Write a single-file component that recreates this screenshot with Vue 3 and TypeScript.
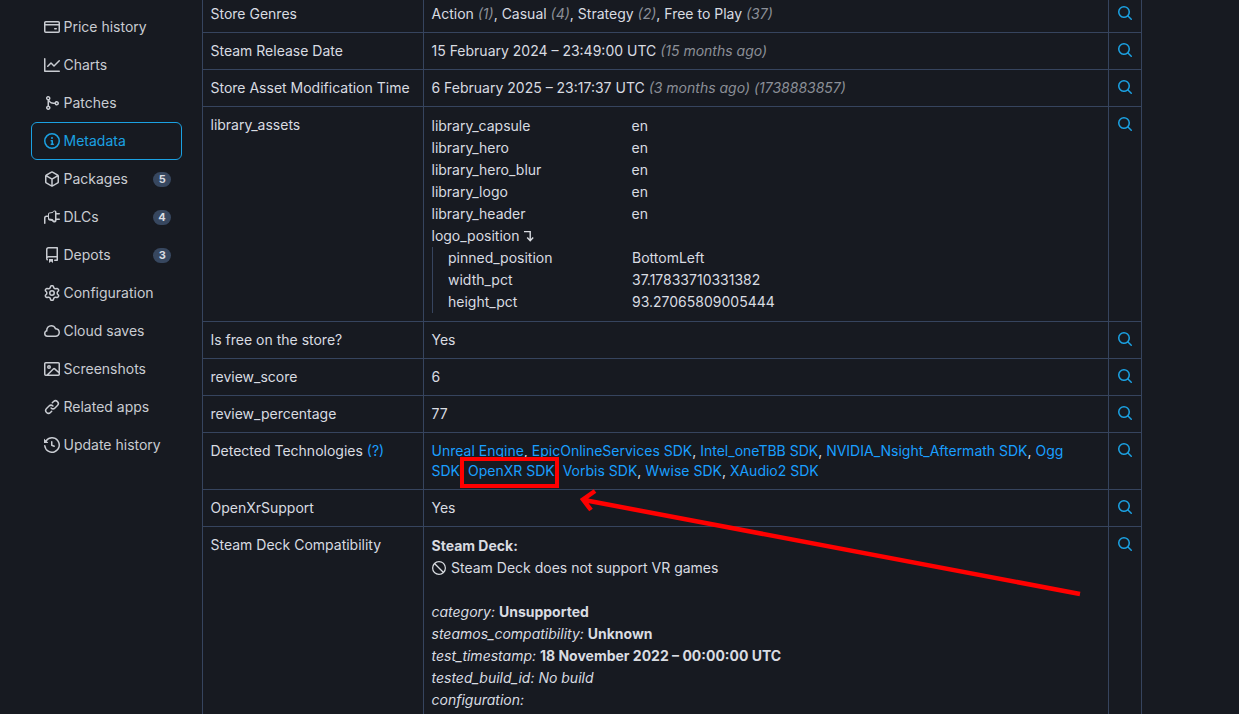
<script setup lang="ts">
interface NavItem { label: string; icon: string; badge?: number; active?: boolean }

const icons: Record<string, string> = {
  card: 'M10.75 9a.75.75 0 0 0 0 1.5h1.5a.75.75 0 0 0 0-1.5h-1.5Z M0 3.75C0 2.784.784 2 1.75 2h12.5c.966 0 1.75.784 1.75 1.75v8.5A1.75 1.75 0 0 1 14.25 14H1.75A1.75 1.75 0 0 1 0 12.25ZM14.5 6.5h-13v5.75c0 .138.112.25.25.25h12.5a.25.25 0 0 0 .25-.25Zm0-2.75a.25.25 0 0 0-.25-.25H1.75a.25.25 0 0 0-.25.25V5h13Z',
  graph: 'M1.5 1.75V13.5h13.75a.75.75 0 0 1 0 1.5H.75a.75.75 0 0 1-.75-.75V1.75a.75.75 0 0 1 1.5 0Zm14.28 2.53-5.25 5.25a.75.75 0 0 1-1.06 0L7 7.06 4.28 9.78a.751.751 0 0 1-1.042-.018.751.751 0 0 1-.018-1.042l3.25-3.25a.75.75 0 0 1 1.06 0L10 7.94l4.72-4.72a.751.751 0 0 1 1.042.018.751.751 0 0 1 .018 1.042Z',
  merge: 'M5.45 5.154A4.25 4.25 0 0 0 9.25 7.5h1.378a2.251 2.251 0 1 1 0 1.5H9.25A5.734 5.734 0 0 1 5 7.123v3.505a2.25 2.25 0 1 1-1.5 0V5.372a2.25 2.25 0 1 1 1.95-.218ZM4.25 13.5a.75.75 0 1 0 0-1.5.75.75 0 0 0 0 1.5Zm8.5-4.5a.75.75 0 1 0 0-1.5.75.75 0 0 0 0 1.5ZM5 3.25a.75.75 0 1 0 0 .005V3.25Z',
  info: 'M0 8a8 8 0 1 1 16 0A8 8 0 0 1 0 8Zm8-6.5a6.5 6.5 0 1 0 0 13 6.5 6.5 0 0 0 0-13ZM6.5 7.75A.75.75 0 0 1 7.25 7h1a.75.75 0 0 1 .75.75v2.75h.25a.75.75 0 0 1 0 1.5h-2a.75.75 0 0 1 0-1.5h.25v-2h-.25a.75.75 0 0 1-.75-.75ZM8 6a1 1 0 1 1 0-2 1 1 0 0 1 0 2Z',
  package: 'm8.878.392 5.25 3.045c.54.314.872.89.872 1.514v6.098a1.75 1.75 0 0 1-.872 1.514l-5.25 3.045a1.75 1.75 0 0 1-1.756 0l-5.25-3.045A1.75 1.75 0 0 1 1 11.049V4.951c0-.624.332-1.201.872-1.514L7.122.392a1.75 1.75 0 0 1 1.756 0ZM7.875 1.69l-4.63 2.685L8 7.133l4.755-2.758-4.63-2.685a.248.248 0 0 0-.25 0ZM2.5 5.677v5.372c0 .09.047.171.125.216l4.625 2.683V8.432Zm6.25 8.271 4.625-2.683a.25.25 0 0 0 .125-.216V5.677L8.75 8.432Z',
  plug: 'M4 8H2.5a1 1 0 0 0-1 1v5.25a.75.75 0 0 1-1.5 0V9a2.5 2.5 0 0 1 2.5-2.5H4V5.133a1.75 1.75 0 0 1 1.533-1.737l2.831-.353.76-.913c.332-.4.825-.63 1.344-.63h.782A1.75 1.75 0 0 1 12.5 3.25V4h2.75a.75.75 0 0 1 0 1.5H12.5v4h2.75a.75.75 0 0 1 0 1.5H12.5v.75a1.75 1.75 0 0 1-1.75 1.75h-.782c-.519 0-1.012-.23-1.344-.63l-.761-.912-2.83-.354A1.75 1.75 0 0 1 4 9.867Zm6.75-5.5h-.782a.25.25 0 0 0-.192.09l-.95 1.14a.75.75 0 0 1-.483.265l-3.124.39a.25.25 0 0 0-.219.248v4.734c0 .126.094.233.219.249l3.124.39a.75.75 0 0 1 .483.264l.95 1.14a.25.25 0 0 0 .192.09h.782a.25.25 0 0 0 .25-.25v-8.5a.25.25 0 0 0-.25-.25Z',
  repo: 'M2 2.5A2.5 2.5 0 0 1 4.5 0h8.75a.75.75 0 0 1 .75.75v12.5a.75.75 0 0 1-.75.75h-2.5a.75.75 0 0 1 0-1.5h1.75v-2h-8a1 1 0 0 0-.714 1.7.75.75 0 1 1-1.072 1.05A2.495 2.495 0 0 1 2 11.5Zm10.5-1h-8a1 1 0 0 0-1 1v6.708A2.486 2.486 0 0 1 4.5 9h8ZM5 12.25a.25.25 0 0 1 .25-.25h3.5a.25.25 0 0 1 .25.25v3.25a.25.25 0 0 1-.4.2l-1.45-1.087a.249.249 0 0 0-.3 0L5.4 15.7a.25.25 0 0 1-.4-.2Z',
  gear: 'M8 0a8.2 8.2 0 0 1 .701.031C9.444.095 9.99.645 10.16 1.29l.288 1.107c.018.066.079.158.212.224.231.114.454.243.668.386.123.082.233.09.299.071l1.103-.303c.644-.176 1.392.021 1.82.63.27.385.506.792.704 1.218.315.675.111 1.422-.364 1.891l-.814.806c-.049.048-.098.147-.088.294.016.257.016.515 0 .772-.01.147.038.246.088.294l.814.806c.475.469.679 1.216.364 1.891a7.977 7.977 0 0 1-.704 1.217c-.428.61-1.176.807-1.82.63l-1.102-.302c-.067-.019-.177-.011-.3.071a5.909 5.909 0 0 1-.668.386c-.133.066-.194.158-.211.224l-.29 1.106c-.168.646-.715 1.196-1.458 1.26a8.006 8.006 0 0 1-1.402 0c-.743-.064-1.289-.614-1.458-1.26l-.289-1.106c-.018-.066-.079-.158-.212-.224a5.738 5.738 0 0 1-.668-.386c-.123-.082-.233-.09-.299-.071l-1.103.303c-.644.176-1.392-.021-1.82-.63a8.12 8.12 0 0 1-.704-1.218c-.315-.675-.111-1.422.363-1.891l.815-.806c.05-.048.098-.147.088-.294a6.214 6.214 0 0 1 0-.772c.01-.147-.038-.246-.088-.294l-.815-.806C.635 6.045.431 5.298.746 4.623a7.92 7.92 0 0 1 .704-1.217c.428-.61 1.176-.807 1.82-.63l1.102.302c.067.019.177.011.3-.071.214-.143.437-.272.668-.386.133-.066.194-.158.211-.224l.29-1.106C6.009.645 6.556.095 7.299.03 7.53.01 7.764 0 8 0Zm-.571 1.525c-.036.003-.108.036-.137.146l-.289 1.105c-.147.561-.549.967-.998 1.189-.173.086-.34.183-.5.29-.417.278-.97.423-1.529.27l-1.103-.303c-.109-.03-.175.016-.195.045-.22.312-.412.644-.573.99-.014.031-.021.11.059.19l.815.806c.411.406.562.957.53 1.456a4.709 4.709 0 0 0 0 .582c.032.499-.119 1.05-.53 1.456l-.815.806c-.081.08-.073.159-.059.19.162.346.353.677.573.989.02.03.085.076.195.046l1.102-.303c.56-.153 1.113-.008 1.53.27.161.107.328.204.501.29.447.222.85.629.997 1.189l.289 1.105c.029.109.101.143.137.146a6.6 6.6 0 0 0 1.142 0c.036-.003.108-.036.137-.146l.289-1.105c.147-.561.549-.967.998-1.189.173-.086.34-.183.5-.29.417-.278.97-.423 1.529-.27l1.103.303c.109.029.175-.016.195-.045.22-.313.411-.644.573-.99.014-.031.021-.11-.059-.19l-.815-.806c-.411-.406-.562-.957-.53-1.456a4.709 4.709 0 0 0 0-.582c-.032-.499.119-1.05.53-1.456l.815-.806c.081-.08.073-.159.059-.19a6.464 6.464 0 0 0-.573-.989c-.02-.03-.085-.076-.195-.046l-1.102.303c-.56.153-1.113.008-1.53-.27a4.44 4.44 0 0 0-.501-.29c-.447-.222-.85-.629-.997-1.189l-.289-1.105c-.029-.11-.101-.143-.137-.146a6.6 6.6 0 0 0-1.142 0ZM11 8a3 3 0 1 1-6 0 3 3 0 0 1 6 0ZM9.5 8a1.5 1.5 0 1 0-3.001.001A1.5 1.5 0 0 0 9.5 8Z',
  cloud: 'M2 7.25A5.225 5.225 0 0 1 7.25 2a5.222 5.222 0 0 1 4.767 3.029A4.472 4.472 0 0 1 16 9.5c0 2.505-1.995 4.5-4.5 4.5h-8A3.474 3.474 0 0 1 0 10.5c0-1.41.809-2.614 2.001-3.17Zm1.54.482a.75.75 0 0 1-.556.832c-.86.22-1.484.987-1.484 1.936 0 1.124.876 2 2 2h8c1.676 0 3-1.324 3-3s-1.324-3-3-3a.75.75 0 0 1-.709-.504A3.72 3.72 0 0 0 7.25 3.5C5.16 3.5 3.5 5.16 3.5 7.25c.002.146.014.292.035.436l.005.046Z',
  image: 'M16 13.25A1.75 1.75 0 0 1 14.25 15H1.75A1.75 1.75 0 0 1 0 13.25V2.75C0 1.784.784 1 1.75 1h12.5c.966 0 1.75.784 1.75 1.75ZM1.75 2.5a.25.25 0 0 0-.25.25v10.5c0 .138.112.25.25.25h.94l.03-.03 6.077-6.078a1.75 1.75 0 0 1 2.412-.06L14.5 10.31V2.75a.25.25 0 0 0-.25-.25Zm12.5 11a.25.25 0 0 0 .25-.25v-.917l-4.298-3.889a.25.25 0 0 0-.344.009L4.81 13.5ZM7 6a2 2 0 1 1-3.999.001A2 2 0 0 1 7 6ZM5.5 6a.5.5 0 1 0-1 0 .5.5 0 0 0 1 0Z',
  link: 'm7.775 3.275 1.25-1.25a3.5 3.5 0 1 1 4.95 4.95l-2.5 2.5a3.5 3.5 0 0 1-4.95 0 .751.751 0 0 1 .018-1.042.751.751 0 0 1 1.042-.018 1.998 1.998 0 0 0 2.83 0l2.5-2.5a2.002 2.002 0 0 0-2.83-2.83l-1.25 1.25a.751.751 0 0 1-1.042-.018.751.751 0 0 1-.018-1.042Zm-4.69 9.64a1.998 1.998 0 0 0 2.83 0l1.25-1.25a.751.751 0 0 1 1.042.018.751.751 0 0 1 .018 1.042l-1.25 1.25a3.5 3.5 0 1 1-4.95-4.95l2.5-2.5a3.5 3.5 0 0 1 4.95 0 .751.751 0 0 1-.018 1.042.751.751 0 0 1-1.042.018 1.998 1.998 0 0 0-2.83 0l-2.5 2.5a1.998 1.998 0 0 0 0 2.83Z',
  history: 'm.427 1.927 1.215 1.215a8.002 8.002 0 1 1-1.6 5.685.75.75 0 1 1 1.493-.154 6.5 6.5 0 1 0 1.18-4.458l1.358 1.358A.25.25 0 0 1 3.896 6H.25A.25.25 0 0 1 0 5.75V2.104a.25.25 0 0 1 .427-.177ZM7.75 4a.75.75 0 0 1 .75.75v2.992l2.028.812a.75.75 0 0 1-.557 1.392l-2.5-1A.751.751 0 0 1 7 8.25v-3.5A.75.75 0 0 1 7.75 4Z',
  search: 'M10.68 11.74a6 6 0 0 1-7.922-8.982 6 6 0 0 1 8.982 7.922l3.04 3.04a.749.749 0 0 1-.326 1.275.749.749 0 0 1-.734-.215ZM11.5 7a4.499 4.499 0 1 0-8.997 0A4.499 4.499 0 0 0 11.5 7Z',
  slash: 'M8 0a8 8 0 1 1 0 16A8 8 0 0 1 8 0ZM1.5 8a6.5 6.5 0 0 0 10.535 5.096l-9.131-9.131A6.472 6.472 0 0 0 1.5 8Zm6.5-6.5a6.47 6.47 0 0 0-4.035 1.404l9.131 9.131A6.5 6.5 0 0 0 8 1.5Z',
}

const nav: NavItem[] = [
  { label: 'Price history', icon: 'card' },
  { label: 'Charts', icon: 'graph' },
  { label: 'Patches', icon: 'merge' },
  { label: 'Metadata', icon: 'info', active: true },
  { label: 'Packages', icon: 'package', badge: 5 },
  { label: 'DLCs', icon: 'plug', badge: 4 },
  { label: 'Depots', icon: 'repo', badge: 3 },
  { label: 'Configuration', icon: 'gear' },
  { label: 'Cloud saves', icon: 'cloud' },
  { label: 'Screenshots', icon: 'image' },
  { label: 'Related apps', icon: 'link' },
  { label: 'Update history', icon: 'history' },
]

const assets = ['library_capsule', 'library_hero', 'library_hero_blur', 'library_logo', 'library_header']
const logoPosition = [
  ['pinned_position', 'BottomLeft'],
  ['width_pct', '37.17833710331382'],
  ['height_pct', '93.27065809005444'],
]
const genres = [
  ['Action', '(1)'],
  ['Casual', '(4)'],
  ['Strategy', '(2)'],
  ['Free to Play', '(37)'],
]
const techs = ['Unreal Engine', 'EpicOnlineServices SDK', 'Intel_oneTBB SDK', 'NVIDIA_Nsight_Aftermath SDK', 'Ogg SDK', 'OpenXR SDK', 'Vorbis SDK', 'Wwise SDK', 'XAudio2 SDK']
</script>

<template>
  <div class="page">
    <nav class="side">
      <a v-for="item in nav" :key="item.label" class="nav" :class="{ active: item.active }">
        <svg class="ico" viewBox="0 0 16 16" width="16" height="16"><path :d="icons[item.icon]" fill-rule="evenodd" /></svg>
        <span class="nav-label">{{ item.label }}</span>
        <span v-if="item.badge" class="badge">{{ item.badge }}</span>
      </a>
    </nav>

    <table class="meta">
      <colgroup>
        <col class="c1" />
        <col class="c2" />
        <col class="c3" />
      </colgroup>
      <tbody>
        <tr>
          <td>Store Genres</td>
          <td>
            <template v-for="(g, i) in genres" :key="g[0]">{{ g[0] }} <i class="muted">{{ g[1] }}</i><template v-if="i < genres.length - 1">, </template></template>
          </td>
          <td class="act"><svg class="ico" viewBox="0 0 16 16" width="16" height="16"><path :d="icons.search" /></svg></td>
        </tr>
        <tr>
          <td>Steam Release Date</td>
          <td>15 February 2024 – 23:49:00 UTC <i class="muted">(15 months ago)</i></td>
          <td class="act"><svg class="ico" viewBox="0 0 16 16" width="16" height="16"><path :d="icons.search" /></svg></td>
        </tr>
        <tr>
          <td>Store Asset Modification Time</td>
          <td>6 February 2025 – 23:17:37 UTC <i class="muted">(3 months ago) (1738883857)</i></td>
          <td class="act"><svg class="ico" viewBox="0 0 16 16" width="16" height="16"><path :d="icons.search" /></svg></td>
        </tr>
        <tr>
          <td>library_assets</td>
          <td>
            <div v-for="a in assets" :key="a" class="kv"><span class="k">{{ a }}</span><span>en</span></div>
            <div class="kv">
              <span class="k k-turn">logo_position
                <svg class="turn" viewBox="0 0 10 12" width="10" height="12"><path d="M0 1.6H6.2V10.5M3.2 7.6L6.2 10.8L9.2 7.6" fill="none" stroke="currentColor" stroke-width="1.4" /></svg>
              </span>
            </div>
            <div class="nest">
              <div v-for="p in logoPosition" :key="p[0]" class="kv"><span class="k k2">{{ p[0] }}</span><span>{{ p[1] }}</span></div>
            </div>
          </td>
          <td class="act"><svg class="ico" viewBox="0 0 16 16" width="16" height="16"><path :d="icons.search" /></svg></td>
        </tr>
        <tr>
          <td>Is free on the store?</td>
          <td>Yes</td>
          <td class="act"><svg class="ico" viewBox="0 0 16 16" width="16" height="16"><path :d="icons.search" /></svg></td>
        </tr>
        <tr>
          <td>review_score</td>
          <td>6</td>
          <td class="act"><svg class="ico" viewBox="0 0 16 16" width="16" height="16"><path :d="icons.search" /></svg></td>
        </tr>
        <tr>
          <td>review_percentage</td>
          <td>77</td>
          <td class="act"><svg class="ico" viewBox="0 0 16 16" width="16" height="16"><path :d="icons.search" /></svg></td>
        </tr>
        <tr>
          <td>Detected Technologies <a class="lnk">(?)</a></td>
          <td class="techs">
            <template v-for="(t, i) in techs" :key="t"><a class="lnk">{{ t }}</a><template v-if="i < techs.length - 1">, </template></template>
          </td>
          <td class="act"><svg class="ico" viewBox="0 0 16 16" width="16" height="16"><path :d="icons.search" /></svg></td>
        </tr>
        <tr>
          <td>OpenXrSupport</td>
          <td>Yes</td>
          <td class="act"><svg class="ico" viewBox="0 0 16 16" width="16" height="16"><path :d="icons.search" /></svg></td>
        </tr>
        <tr>
          <td>Steam Deck Compatibility</td>
          <td class="deck">
            <div><b>Steam Deck:</b></div>
            <div class="deck-note"><svg class="ico" viewBox="0 0 16 16" width="14" height="14"><path :d="icons.slash" fill-rule="evenodd" /></svg> Steam Deck does not support VR games</div>
            <div class="blank"></div>
            <div><i>category:</i> <b>Unsupported</b></div>
            <div><i>steamos_compatibility:</i> <b>Unknown</b></div>
            <div><i>test_timestamp:</i> <b>18 November 2022 – 00:00:00 UTC</b></div>
            <div><i>tested_build_id: No build</i></div>
            <div><i>configuration:</i></div>
          </td>
          <td class="act"><svg class="ico" viewBox="0 0 16 16" width="16" height="16"><path :d="icons.search" /></svg></td>
        </tr>
      </tbody>
    </table>

    <svg class="markup" viewBox="0 0 1239 714" width="1239" height="714">
      <rect x="462" y="459" width="95" height="27" fill="none" stroke="#ff0000" stroke-width="4" />
      <path d="M1080 594 L584 500 M595 491 L583 499.5 L591 510" fill="none" stroke="#ff0000" stroke-width="4.5" />
    </svg>
  </div>
</template>

<style>
html, body { margin: 0; background: #171a21; }
</style>

<style scoped>
.page {
  position: relative;
  display: flex;
  align-items: flex-start;
  gap: 20px;
  height: 714px;
  overflow: hidden;
  padding-left: 31px;
  background: #171a21;
  color: #d9dce1;
  font: 14px/20px Inter, "Liberation Sans", sans-serif;
}
.side {
  width: 151px;
  flex: none;
  padding-top: 8px;
  display: flex;
  flex-direction: column;
}
.nav {
  display: flex;
  align-items: center;
  height: 38px;
  box-sizing: border-box;
  padding: 0 10px 0 12px;
  border: 1px solid transparent;
  border-radius: 6px;
  color: #c9ccd2;
  gap: 3.5px;
}
.nav .ico { flex: none; }
.nav-label { flex: 1; }
.ico { fill: currentColor; display: block; }
.nav.active { color: #1ba1e2; border-color: #1ba1e2; }
.badge {
  background: #37475f;
  color: #d9dce1;
  font-size: 11px;
  font-weight: 700;
  line-height: 15px;
  height: 15px;
  padding: 0 5.25px;
  border-radius: 8px;
}
.meta {
  width: 940px;
  flex: none;
  table-layout: fixed;
  border-collapse: collapse;
  margin-top: -5px;
}
.c1 { width: 221px; }
.c3 { width: 33px; }
.meta td {
  border: 1px solid #36445e;
  padding: 8px 8px 8px 7.5px;
  vertical-align: top;
}
.meta td.act { color: #1ba1e2; padding-left: 8px; }
.meta td.techs { padding-right: 12px; }
.act .ico { margin-top: 1px; }
.muted { color: #8b8f97; }
.lnk { color: #1a9fff; }
.kv { display: flex; height: 22px; line-height: 22px; }
.k { width: 200px; flex: none; }
.k2 { width: 184px; }
.k-turn { display: flex; align-items: center; gap: 4px; }
.turn { display: block; }
.nest { border-left: 1px solid #36445e; padding-left: 15.5px; }
.deck { line-height: 22px; }
.deck-note { display: flex; align-items: center; gap: 5.5px; }
.blank { height: 22px; }
.markup { position: absolute; left: 0; top: 0; pointer-events: none; }
</style>
